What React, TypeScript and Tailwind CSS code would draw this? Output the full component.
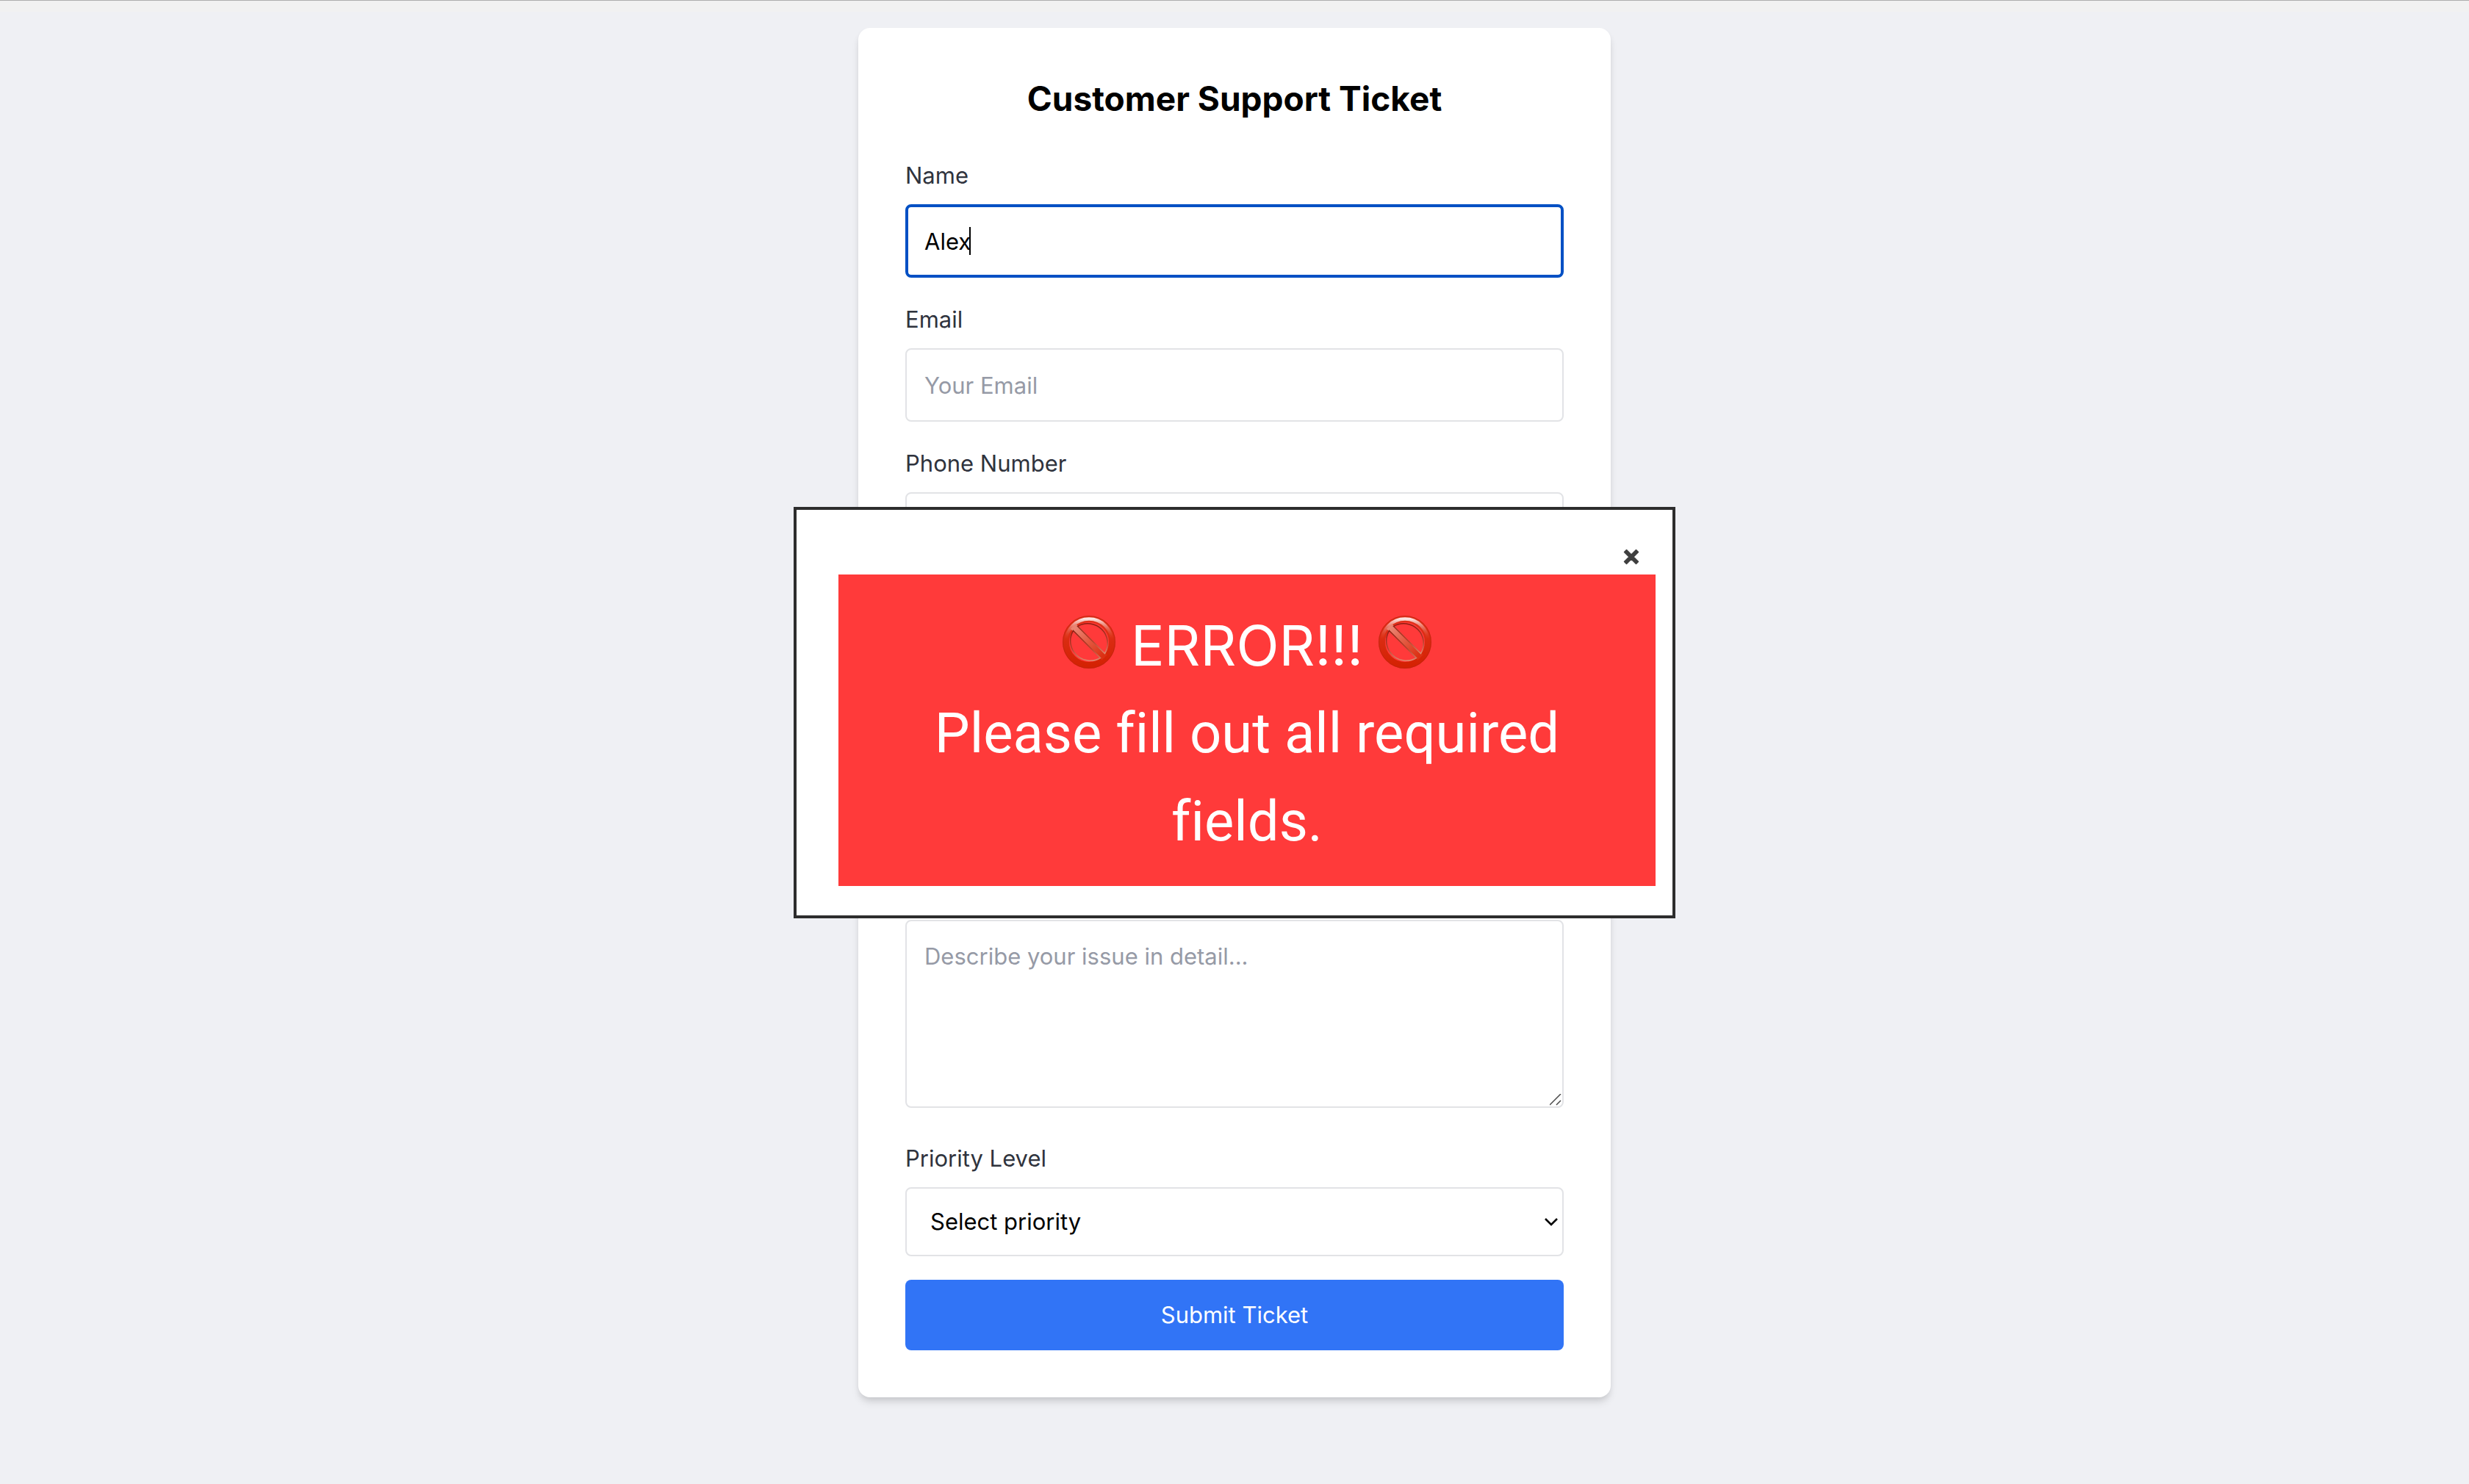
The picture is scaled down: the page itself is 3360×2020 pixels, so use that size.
import React, { useState } from "react";

const controlClass =
  "block w-full rounded-lg border-2 border-[#e2e3e6] bg-white text-[31px] leading-[48px] text-black outline-none placeholder:text-[#969aa6] placeholder:opacity-100";

function Field({ id, label, children }: { id: string; label?: string; children: React.ReactNode }) {
  return (
    <div className="mb-8">
      {label ? (
        <label htmlFor={id} className="mb-[14px] block text-[31px] leading-[50px] text-[#2f333d]">
          {label}
        </label>
      ) : (
        <div className="h-16" />
      )}
      <div className="relative">{children}</div>
    </div>
  );
}

function SelectBox({ id, name, options }: { id: string; name?: string; options: string[] }) {
  return (
    <>
      <select id={id} aria-label={name} className={`${controlClass} h-[94px] appearance-none pr-12 pl-8`}>
        {options.map((o) => (
          <option key={o}>{o}</option>
        ))}
      </select>
      <svg
        className="pointer-events-none absolute top-[40px] right-[6px] h-[14px] w-[22px]"
        viewBox="0 0 22 14"
        fill="none"
        stroke="black"
        strokeWidth="2.6"
        aria-hidden="true"
      >
        <path d="M3 3 L11 11 L19 3" />
      </svg>
    </>
  );
}

function Prohibited({ id }: { id: string }) {
  return (
    <svg className="mb-2 block h-[74px] w-[74px]" viewBox="0 0 74 74" role="img" aria-label="Prohibited">
      <defs>
        <linearGradient id={`${id}-ring`} x1="0" y1="0" x2="0" y2="1">
          <stop offset="0" stopColor="#e3301a" />
          <stop offset="0.5" stopColor="#d92b10" />
          <stop offset="1" stopColor="#d42203" />
        </linearGradient>
        <linearGradient id={`${id}-shine`} x1="0" y1="0" x2="0" y2="1">
          <stop offset="0" stopColor="#fbe4e0" />
          <stop offset="0.22" stopColor="#e88070" stopOpacity="0.6" />
          <stop offset="0.45" stopColor="#e04020" stopOpacity="0" />
        </linearGradient>
        <linearGradient id={`${id}-bar`} x1="18" y1="18" x2="56" y2="56" gradientUnits="userSpaceOnUse">
          <stop offset="0" stopColor="#ea8472" />
          <stop offset="0.5" stopColor="#e2583f" />
          <stop offset="1" stopColor="#dc3013" />
        </linearGradient>
        <linearGradient id={`${id}-rim`} x1="0" y1="0" x2="0" y2="1">
          <stop offset="0" stopColor="#8e1c10" />
          <stop offset="0.6" stopColor="#b5402c" />
          <stop offset="1" stopColor="#e08a70" />
        </linearGradient>
      </defs>
      <circle cx="37" cy="37" r="31.5" fill="none" stroke={`url(#${id}-ring)`} strokeWidth="9" />
      <circle cx="37" cy="37" r="31.5" fill="none" stroke={`url(#${id}-shine)`} strokeWidth="4.5" />
      <circle cx="37" cy="37" r="35.5" fill="none" stroke="#b92312" strokeOpacity="0.6" strokeWidth="1" />
      <path d="M15.5 15.5 L58 58" stroke={`url(#${id}-bar)`} strokeWidth="10" />
      <path d="M21.5 15.5 A27 27 0 0 1 58.5 52.5 Z" fill="none" stroke={`url(#${id}-rim)`} strokeWidth="1.5" />
      <path d="M15.5 21.5 A27 27 0 0 0 52.5 58.5 Z" fill="none" stroke={`url(#${id}-rim)`} strokeWidth="1.5" />
    </svg>
  );
}

export default function App() {
  const [name, setName] = useState("Alex");
  const [showError, setShowError] = useState(true);

  return (
    <div className="min-h-screen border-t border-[#adadad] bg-[#eff0f4] font-['Inter','Liberation_Sans',sans-serif] text-black">
      <div className="h-[15px] bg-[#f1f1f1]" />
      <main className="px-8 pt-[22px] pb-8">
        <form
          onSubmit={(e) => {
            e.preventDefault();
            setShowError(true);
          }}
          className="mx-auto w-full max-w-[1024px] rounded-2xl bg-white p-16 shadow-[0_8px_12px_-2px_rgba(0,0,0,0.12),0_4px_8px_-2px_rgba(0,0,0,0.08)]"
        >
          <h1 className="mb-12 text-center text-[46px] leading-[64px] font-bold">Customer Support Ticket</h1>

          <Field id="name" label="Name">
            <input
              id="name"
              value={name}
              onChange={(e) => setName(e.target.value)}
              className="block h-[100px] w-full rounded-lg border-4 border-[#0350c4] bg-white px-[22px] text-[31px] leading-[48px] outline-none"
            />
            {name === "Alex" && (
              <span className="pointer-events-none absolute top-[31px] left-[87px] h-[38px] w-[2px] bg-black" />
            )}
          </Field>
          <Field id="email" label="Email">
            <input id="email" type="email" placeholder="Your Email" className={`${controlClass} h-[100px] px-6`} />
          </Field>
          <Field id="phone" label="Phone Number">
            <input id="phone" type="tel" className={`${controlClass} h-[100px] px-6`} />
          </Field>
          <Field id="subject">
            <input id="subject" aria-label="Subject" className={`${controlClass} h-[100px] px-6`} />
          </Field>
          <Field id="category">
            <SelectBox id="category" name="Category" options={[]} />
          </Field>
          <Field id="description">
            <textarea
              id="description"
              aria-label="Description"
              placeholder="Describe your issue in detail..."
              className={`${controlClass} mb-11 h-64 resize-none px-6 py-6`}
            />
            <svg
              className="pointer-events-none absolute right-[3px] bottom-[3px] h-4 w-4"
              viewBox="0 0 16 16"
              stroke="#4a4a4a"
              strokeWidth="1.5"
              aria-hidden="true"
            >
              <path d="M0 15 L15 0 M9 15 L15 9" />
            </svg>
          </Field>
          <Field id="priority" label="Priority Level">
            <SelectBox id="priority" options={["Select priority", "Low", "Medium", "High"]} />
          </Field>
          <button
            type="submit"
            className="block h-24 w-full rounded-lg bg-[#3174f6] text-center text-[31px] leading-[48px] text-white"
          >
            Submit Ticket
          </button>
        </form>
      </main>

      {showError && (
        <div className="pointer-events-none fixed inset-0 flex items-center justify-center pb-20">
          <div
            role="alertdialog"
            aria-labelledby="error-text"
            className="pointer-events-auto w-full max-w-[1200px] border-4 border-[#2d2d2d] bg-white pt-10 pr-[23px] pb-10 pl-[57px]"
          >
            <div className="flex h-12 items-center justify-end pr-[22px]">
              <button type="button" aria-label="Close" onClick={() => setShowError(false)}>
                <svg
                  className="block h-[22px] w-[22px]"
                  viewBox="0 0 22 22"
                  fill="#3f3f3f"
                  stroke="#3f3f3f"
                  strokeWidth="1.5"
                  strokeLinejoin="round"
                >
                  <path d="M4.5 1.5 L11 8 L17.5 1.5 L20.5 4.5 L14 11 L20.5 17.5 L17.5 20.5 L11 14 L4.5 20.5 L1.5 17.5 L8 11 L1.5 4.5 Z" />
                </svg>
              </button>
            </div>
            <div
              id="error-text"
              className="bg-[#ff3a3a] px-8 pt-9 pb-7 text-center text-[76px] leading-[120px] text-white"
            >
              <div className="flex items-center justify-center gap-5">
                <Prohibited id="left" />
                <span>ERROR!!!</span>
                <Prohibited id="right" />
              </div>
              <p className="px-10 font-['Roboto','Liberation_Sans',sans-serif] [font-variant-ligatures:none]">
                Please fill out all required fields.
              </p>
            </div>
          </div>
        </div>
      )}
    </div>
  );
}
